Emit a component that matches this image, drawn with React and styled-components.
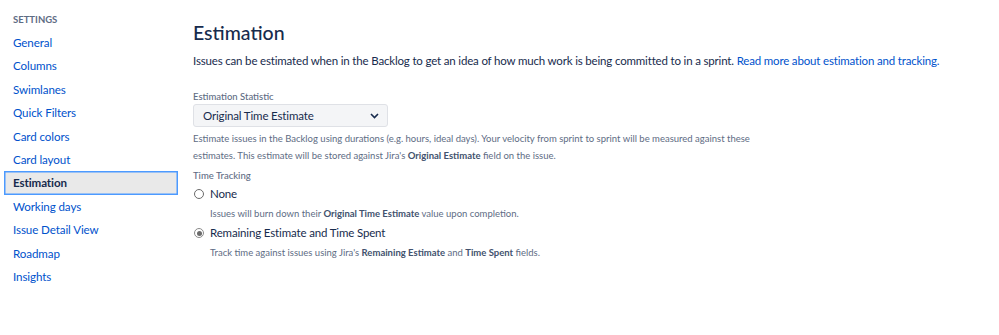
import React from "react";
import styled, { createGlobalStyle } from "styled-components";

const Global = createGlobalStyle`
  html, body { margin: 0; padding: 0; background: #fff; }
  body { font-family: Lato, "Noto Sans", sans-serif; color: #172b4d; }
`;

const Page = styled.div`
  display: flex;
  width: 999px;
  height: 335px;
  background: #fff;
`;

const Sidebar = styled.nav`
  width: 178px;
  flex: none;
  padding: 14px 0 0 4px;
  box-sizing: border-box;
  display: flex;
  flex-direction: column;
`;

const SideHeading = styled.div`
  font-size: 9.5px;
  font-weight: 700;
  color: #5e6c84;
  text-transform: uppercase;
  padding: 0 0 5px 9px;
  line-height: 12px;
`;

const NavItem = styled.a`
  display: block;
  font-size: 11.6px;
  letter-spacing: -0.1px;
  line-height: 21.4px;
  padding: 0 8px;
  border: 1px solid ${(p) => (p.$active ? "#4c9aff" : "transparent")};
  background: ${(p) => (p.$active ? "#e9e9e9" : "transparent")};
  color: ${(p) => (p.$active ? "#172b4d" : "#0052cc")};
  font-weight: ${(p) => (p.$active ? 700 : 400)};
  text-decoration: none;
  box-shadow: ${(p) => (p.$active ? "inset 0 0 0 0.5px #4c9aff" : "none")};
`;

const Main = styled.main`
  flex: 1;
  padding: 18px 0 0 15px;
`;

const Title = styled.h1`
  margin: 0;
  font-size: 19.5px;
  font-weight: 500;
  line-height: 30px;
  color: #172b4d;
`;

const Lead = styled.p`
  margin: 4px 0 0;
  font-size: 11.5px;
  letter-spacing: -0.17px;
  line-height: 18px;
  color: #172b4d;
`;

const Link = styled.a`
  color: #0052cc;
  text-decoration: none;
`;

const FieldLabel = styled.div`
  font-size: 9.5px;
  font-weight: 500;
  color: #5e6c84;
  line-height: 12px;
  margin-top: ${(p) => p.$top}px;
`;

const SelectBox = styled.div`
  margin-top: 1px;
  width: 195px;
  height: 23px;
  box-sizing: border-box;
  background: #f4f5f7;
  border: 1px solid #dfe1e6;
  border-radius: 3px;
  display: flex;
  align-items: center;
  justify-content: space-between;
  padding: 0 8px 0 9px;
  font-size: 11.5px;
  letter-spacing: -0.15px;
  color: #172b4d;
`;

const Help = styled.p`
  margin: ${(p) => p.$top || 0}px 0 0 ${(p) => p.$indent || 0}px;
  font-size: 9.5px;
  line-height: 17px;
  color: #5e6c84;
  width: 580px;
  b { font-weight: 700; color: #42526e; }
`;

const RadioRow = styled.label`
  display: flex;
  align-items: center;
  gap: 6px;
  font-size: 11.5px;
  letter-spacing: -0.15px;
  color: #172b4d;
  margin-top: ${(p) => p.$top}px;
  padding-left: 1px;
  line-height: 18px;
`;

const RadioCircle = styled.span`
  width: 10px;
  height: 10px;
  border-radius: 50%;
  box-sizing: border-box;
  border: 1px solid ${(p) => (p.$checked ? "#8a8a8a" : "#6b6b6b")};
  background: #fff;
  display: flex;
  align-items: center;
  justify-content: center;
  &::after {
    content: "";
    display: ${(p) => (p.$checked ? "block" : "none")};
    width: 5px;
    height: 5px;
    border-radius: 50%;
    background: #6b6b6b;
  }
`;

const Chevron = () => (
  <svg width="9" height="6" viewBox="0 0 9 6">
    <path d="M1 1 L4.5 4.5 L8 1" fill="none" stroke="#172b4d" strokeWidth="1.6" />
  </svg>
);

const items = [
  "General",
  "Columns",
  "Swimlanes",
  "Quick Filters",
  "Card colors",
  "Card layout",
  "Estimation",
  "Working days",
  "Issue Detail View",
  "Roadmap",
  "Insights",
];

export default function App() {
  return (
    <>
      <Global />
      <Page>
        <Sidebar>
          <SideHeading>Settings</SideHeading>
          {items.map((it) => (
            <NavItem key={it} $active={it === "Estimation"}>
              {it}
            </NavItem>
          ))}
        </Sidebar>
        <Main>
          <Title>Estimation</Title>
          <Lead>
            Issues can be estimated when in the Backlog to get an idea of how much work is being committed to in a sprint.{" "}
            <Link>Read more about estimation and tracking.</Link>
          </Lead>
          <FieldLabel $top={21}>Estimation Statistic</FieldLabel>
          <SelectBox>
            <span>Original Time Estimate</span>
            <Chevron />
          </SelectBox>
          <Help $top={3}>
            Estimate issues in the Backlog using durations (e.g. hours, ideal days). Your velocity from sprint to sprint will be measured against these
            estimates. This estimate will be stored against Jira's <b>Original Estimate</b> field on the issue.
          </Help>
          <FieldLabel $top={6}>Time Tracking</FieldLabel>
          <RadioRow $top={3}>
            <RadioCircle />
            None
          </RadioRow>
          <Help $top={2} $indent={17}>
            Issues will burn down their <b>Original Time Estimate</b> value upon completion.
          </Help>
          <RadioRow $top={2}>
            <RadioCircle $checked />
            Remaining Estimate and Time Spent
          </RadioRow>
          <Help $top={2} $indent={17}>
            Track time against issues using Jira's <b>Remaining Estimate</b> and <b>Time Spent</b> fields.
          </Help>
        </Main>
      </Page>
    </>
  );
}
